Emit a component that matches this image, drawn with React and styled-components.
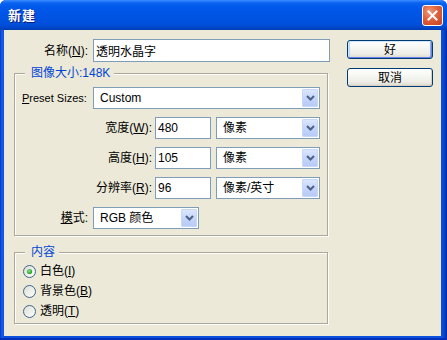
import React from 'react';
import styled, { createGlobalStyle } from 'styled-components';

const Global = createGlobalStyle`
  html, body { margin: 0; padding: 0; background: #ffffff; }
  body {
    font-family: "Liberation Sans", "Noto Sans CJK SC", sans-serif;
    font-size: 12px;
    color: #000;
  }
  * { box-sizing: border-box; }
`;

const FONT = `"Liberation Sans", "Noto Sans CJK SC", sans-serif`;

const Window = styled.div`
  width: 447px;
  height: 340px;
  display: flex;
  flex-direction: column;
  background: #0a50dc;
  border-radius: 6px 6px 0 0;
  overflow: hidden;
`;

const TitleBar = styled.div`
  height: 30px;
  flex: none;
  display: flex;
  align-items: center;
  justify-content: space-between;
  padding: 0 4px 0 8px;
  background: linear-gradient(
    to bottom,
    #3b8cff 0px,
    #0a62f0 3px,
    #0058ea 8px,
    #0054e3 16px,
    #0050dc 24px,
    #0046c8 28px,
    #003bb0 30px
  );
`;

const Title = styled.span`
  font-family: "Noto Sans CJK SC", sans-serif;
  font-weight: 700;
  font-size: 13px;
  line-height: 16px;
  color: #fff;
  text-shadow: 1px 1px 0 #0a1e78;
  letter-spacing: 1px;
`;

const CloseButton = styled.div`
  width: 21px;
  height: 21px;
  border: 1px solid #fff;
  border-radius: 3px;
  background: radial-gradient(circle at 35% 30%, #f09a7c 0%, #e0603c 45%, #c8401e 100%);
  display: flex;
  align-items: center;
  justify-content: center;
`;

const Frame = styled.div`
  flex: 1;
  display: flex;
  padding: 0 6px 4px 4px;
  background: linear-gradient(to right, #0634c8 0px, #1660ea 2px, #0a50dc 4px, #0a50dc 441px, #0845d0 444px, #0029a8 447px);
  box-shadow: inset 0 -2px 0 #0030b8, inset 0 -1px 0 #001a90;
`;

const Client = styled.div`
  flex: 1;
  background: #ece9d8;
  display: flex;
  gap: 17px;
  padding: 9px 0 0 10px;
`;

const LeftCol = styled.div`
  width: 316px;
  display: flex;
  flex-direction: column;
`;

const RightCol = styled.div`
  width: 86px;
  padding-top: 1px;
  display: flex;
  flex-direction: column;
  gap: 9px;
`;

const Row = styled.div`
  display: flex;
  align-items: center;
  height: ${p => p.$h || 22}px;
`;

const Label = styled.span`
  width: ${p => p.$w}px;
  margin-right: ${p => p.$gap ?? 5}px;
  text-align: ${p => p.$left ? 'left' : 'right'};
  font-size: ${p => p.$size || 12}px;
  line-height: 14px;
  white-space: nowrap;
`;

const TextBox = styled.input`
  width: ${p => p.$w}px;
  height: ${p => p.$h || 22}px;
  border: 1px solid #7f9db9;
  background: #fff;
  margin: 0;
  padding: 0 0 0 ${p => p.$pad ?? 2}px;
  font-family: ${FONT};
  font-size: 12px;
  color: #000;
  outline: none;
`;

const Combo = styled.div`
  width: ${p => p.$w}px;
  height: ${p => p.$h || 22}px;
  border: 1px solid #7f9db9;
  background: #fff;
  display: flex;
  align-items: center;
  padding: 1px;
`;

const ComboText = styled.span`
  flex: 1;
  padding-left: 5px;
  font-size: 12px;
  line-height: 14px;
  white-space: nowrap;
`;

const DropButton = styled.span`
  width: 16px;
  height: 100%;
  display: flex;
  align-items: center;
  justify-content: center;
  border-radius: 1px;
  background: linear-gradient(to bottom, #dbe6fd 0%, #c6d6fb 50%, #b7cbf7 100%);
  border: 1px solid #c8d7f8;
`;

const Group = styled.fieldset`
  width: 314px;
  margin: ${p => p.$mt}px 0 0 0;
  padding: ${p => p.$pt}px 0 ${p => p.$pb}px 7px;
  border: 1px solid #aca899;
  box-shadow: inset 1px 1px 0 #fff, 1px 1px 0 #fff;
  min-width: 0;
`;

const Legend = styled.legend`
  margin-left: 3px;
  padding: 0 4px 0 6px;
  line-height: 14px;
  height: 14px;
  font-size: 12px;
  color: #0046d5;
  background: #ece9d8;
  white-space: nowrap;
`;

const Rows = styled.div`
  display: flex;
  flex-direction: column;
  gap: ${p => p.$gap || 0}px;
`;

const RadioRow = styled.label`
  display: flex;
  align-items: center;
  height: 20px;
  margin-left: 1px;
  gap: 4px;
`;

const RadioText = styled.span`
  font-size: 12px;
  line-height: 14px;
  white-space: nowrap;
`;

const Button = styled.div`
  width: 86px;
  height: 19px;
  border: 1px solid #003c74;
  border-radius: 3px;
  background: linear-gradient(to bottom, #ffffff 0%, #f8f8f4 35%, #eeede7 75%, #dcd8cc 100%);
  display: flex;
  align-items: center;
  justify-content: center;
  font-size: 12px;
  line-height: 14px;
  box-shadow: ${p => p.$default
    ? 'inset 1px 1px 0 #cee7ff, inset -1px -1px 0 #6982ee, inset 2px 0 0 #bcd4f6, inset -2px 0 0 #89ade4'
    : 'inset -1px -1px 0 #d6d0c5'};
`;

const Ul = styled.span`
  text-decoration: underline;
  text-underline-offset: 1px;
`;

const Spacer = styled.span`
  width: 5px;
  flex: none;
`;

const Chevron = () => (
  <svg width="9" height="6" viewBox="0 0 9 6">
    <path d="M1 1 L4.5 4.5 L8 1" fill="none" stroke="#4d6185" strokeWidth="2" />
  </svg>
);

const Select = ({ w, children }) => (
  <Combo $w={w}>
    <ComboText>{children}</ComboText>
    <DropButton><Chevron /></DropButton>
  </Combo>
);

const Radio = ({ checked }) => (
  <svg width="13" height="13" viewBox="0 0 13 13">
    <defs>
      <linearGradient id="rb" x1="0" y1="0" x2="1" y2="1">
        <stop offset="0" stopColor="#dcdcd5" />
        <stop offset="1" stopColor="#ffffff" />
      </linearGradient>
      <radialGradient id="rd" cx="0.4" cy="0.4" r="0.6">
        <stop offset="0" stopColor="#8fe08a" />
        <stop offset="1" stopColor="#21a121" />
      </radialGradient>
    </defs>
    <circle cx="6.5" cy="6.5" r="6" fill="url(#rb)" stroke="#3f6589" strokeWidth="1" />
    {checked && <circle cx="6.5" cy="6.5" r="2.6" fill="url(#rd)" />}
  </svg>
);

const CloseX = () => (
  <svg width="11" height="11" viewBox="0 0 11 11">
    <path d="M1.5 1.5 L9.5 9.5 M9.5 1.5 L1.5 9.5" stroke="#fff" strokeWidth="2" strokeLinecap="square" />
  </svg>
);

export default function App() {
  return (
    <>
      <Global />
      <Window>
        <TitleBar>
          <Title>新建</Title>
          <CloseButton><CloseX /></CloseButton>
        </TitleBar>
        <Frame>
          <Client>
            <LeftCol>
              <Row $h={23}>
                <Label $w={74}>名称(<Ul>N</Ul>):</Label>
                <TextBox $w={237} $h={23} $pad={2} defaultValue="透明水晶字" readOnly />
              </Row>
              <Group $mt={4} $pt={7} $pb={6}>
                <Legend>图像大小:148K</Legend>
                <Rows $gap={8}>
                  <Row>
                    <Label $w={66} $left $size={11}><Ul>P</Ul>reset Sizes:</Label>
                    <Select w={227}>Custom</Select>
                  </Row>
                  <Row>
                    <Label $w={130} $gap={3}>宽度(<Ul>W</Ul>):</Label>
                    <TextBox $w={56} defaultValue="480" readOnly />
                    <Spacer />
                    <Select w={104}>像素</Select>
                  </Row>
                  <Row>
                    <Label $w={130} $gap={3}>高度(<Ul>H</Ul>):</Label>
                    <TextBox $w={56} defaultValue="105" readOnly />
                    <Spacer />
                    <Select w={104}>像素</Select>
                  </Row>
                  <Row>
                    <Label $w={130} $gap={3}>分辨率(<Ul>R</Ul>):</Label>
                    <TextBox $w={56} defaultValue="96" readOnly />
                    <Spacer />
                    <Select w={104}>像素/英寸</Select>
                  </Row>
                  <Row>
                    <Label $w={66}><Ul>模</Ul>式:</Label>
                    <Select w={106}>RGB 颜色</Select>
                  </Row>
                </Rows>
              </Group>
              <Group $mt={9} $pt={2} $pb={2}>
                <Legend>内容</Legend>
                <Rows>
                  <RadioRow><Radio checked /><RadioText>白色(<Ul>I</Ul>)</RadioText></RadioRow>
                  <RadioRow><Radio /><RadioText>背景色(<Ul>B</Ul>)</RadioText></RadioRow>
                  <RadioRow><Radio /><RadioText>透明(<Ul>T</Ul>)</RadioText></RadioRow>
                </Rows>
              </Group>
            </LeftCol>
            <RightCol>
              <Button $default>好</Button>
              <Button>取消</Button>
            </RightCol>
          </Client>
        </Frame>
      </Window>
    </>
  );
}
